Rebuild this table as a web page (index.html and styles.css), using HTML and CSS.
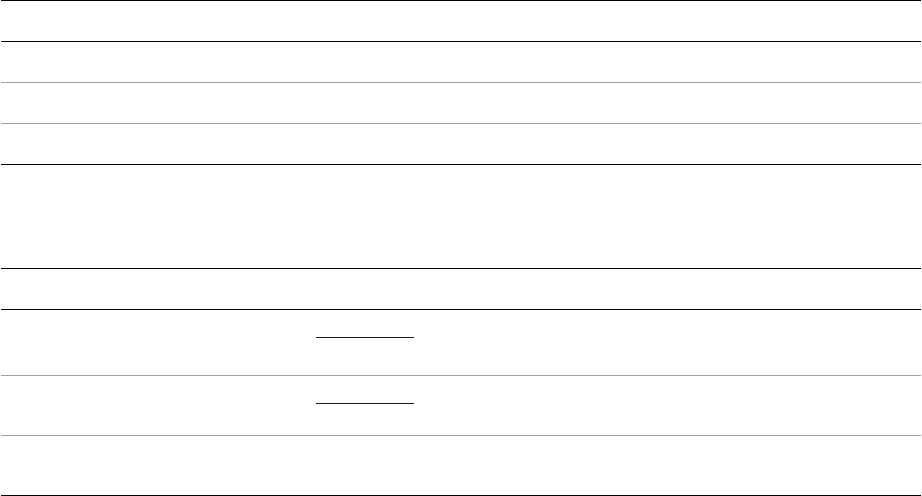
FILE: index.html
```html
<!DOCTYPE html>
<html lang="en">
<head>
<meta charset="utf-8">
<title>Table</title>
<link rel="stylesheet" href="styles.css">
</head>
<body>
<div class="sheet">
  <div class="row h40 dark"></div>
  <div class="row h40 light"></div>
  <div class="row h40 light"></div>
  <div class="row h40 dark"></div>
  <div class="row h103 dark"></div>
  <div class="row h40 dark"></div>
  <div class="row h65 light link-row first-link"><span class="label"></span><a class="link" href="#"></a></div>
  <div class="row h59 light link-row second-link"><span class="label"></span><a class="link" href="#"></a></div>
  <div class="row h59 dark"></div>
</div>
</body>
</html>
```

FILE: styles.css
```css
html, body {
  margin: 0;
  padding: 0;
  background: #ffffff;
  font-family: "Liberation Sans", Arial, sans-serif;
}
.sheet {
  width: 920px;
  margin-left: 1px;
  border-top: 1px solid #000;
}
.row {
  display: flex;
  box-sizing: content-box;
}
.dark { border-bottom: 1px solid #000; }
.light { border-bottom: 1px solid #a0a0a0; }
.h40 { height: 40px; }
.h59 { height: 59px; }
.h65 { height: 65px; }
.h103 { height: 103px; }
.label {
  width: 315px;
  flex: none;
}
.link {
  display: block;
  width: 98px;
  height: 0;
  border-bottom: 1px solid #0000ee;
}
.first-link .link { margin-top: 27px; }
.second-link .link { margin-top: 27px; }
```
